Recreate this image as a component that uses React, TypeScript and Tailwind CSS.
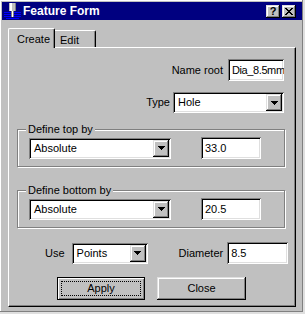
import React from "react";

const font = "font-['Liberation_Sans',Arial,sans-serif]";
const sunken =
  "shadow-[inset_1px_1px_#808080,inset_-1px_-1px_#ffffff,inset_2px_2px_#000000,inset_-2px_-2px_#dfdfdf]";
const raised =
  "shadow-[inset_-1px_-1px_#000000,inset_1px_1px_#dfdfdf,inset_-2px_-2px_#808080,inset_2px_2px_#ffffff]";

const Arrow = () => (
  <svg width="7" height="4" viewBox="0 0 7 4" shapeRendering="crispEdges">
    <path d="M0 0h7v1H0zM1 1h5v1H1zM2 2h3v1H2zM3 3h1v1H3z" fill="#000" />
  </svg>
);

const Combo = ({ value, className }: { value: string; className: string }) => (
  <div className={`flex h-[21px] bg-white p-[2px] ${sunken} ${className}`}>
    <span className="flex-1 pl-[3px] leading-[17px] text-[11px] text-black">{value}</span>
    <div className={`flex w-[16px] items-center justify-center bg-[#c0c0c0] ${raised}`}>
      <Arrow />
    </div>
  </div>
);

const Field = ({ value, className }: { value: string; className: string }) => (
  <div className={`flex h-[22px] items-center overflow-hidden whitespace-nowrap bg-white pl-[4px] text-[11px] text-black ${sunken} ${className}`}>
    {value}
  </div>
);

const Group = ({ title, mode, value, className }: { title: string; mode: string; value: string; className: string }) => (
  <div className={`relative ml-[8px] h-[38px] w-[268px] border border-[#808080] shadow-[1px_1px_0_#ffffff,inset_1px_1px_0_#ffffff] ${className}`}>
    <span className="absolute -top-[8px] left-[8px] bg-[#c0c0c0] px-[2px] text-[11px] leading-[14px] text-black">{title}</span>
    <div className="flex items-center pl-[11px] pt-[7px]">
      <Combo value={mode} className="w-[142px]" />
      <Field value={value} className="ml-[30px] w-[60px]" />
    </div>
  </div>
);

export default function App() {
  return (
    <div className={`h-[314px] w-[305px] bg-[#dfdfdf] ${font}`}>
      <div className="flex h-[312px] w-[303px] flex-col border-b border-r border-[#808080] bg-[#c0c0c0] pl-[2px] pt-[2px] shadow-[inset_1px_1px_#ffffff]">
        {/* title bar */}
        <div className="flex h-[18px] w-[300px] items-center bg-[#000080] pl-[2px]">
          <svg width="17" height="16" viewBox="0 0 17 16" shapeRendering="crispEdges">
            <rect x="0" y="9" width="17" height="1" fill="#0000ff" />
            <rect x="0" y="11" width="17" height="1" fill="#0000ff" />
            <rect x="0" y="13" width="17" height="1" fill="#0000ff" />
            <rect x="2" y="15" width="13" height="1" fill="#0000ff" />
            <rect x="5" y="0" width="7" height="8" fill="#c0c0c0" />
            <rect x="6" y="0" width="2" height="8" fill="#ffffff" />
            <rect x="11" y="0" width="1" height="8" fill="#808080" />
            <rect x="7" y="8" width="3" height="6" fill="#808080" />
            <rect x="8" y="8" width="1" height="6" fill="#ffffff" />
          </svg>
          <span className="ml-[2px] flex-1 text-[12px] font-bold text-white">Feature Form</span>
          <div className={`flex h-[13px] w-[14px] items-center justify-center bg-[#c0c0c0] pt-[1px] text-[11px] font-bold leading-none text-black ${raised}`}>
            ?
          </div>
          <div className={`ml-[2px] mr-[6px] flex h-[13px] w-[14px] items-center justify-center bg-[#c0c0c0] ${raised}`}>
            <svg width="8" height="7" viewBox="0 0 8 7" shapeRendering="crispEdges">
              <path
                d="M0 0h2v1H0zM6 0h2v1H6zM1 1h2v1H1zM5 1h2v1H5zM2 2h4v1H2zM3 3h2v1H3zM2 4h4v1H2zM1 5h2v1H1zM5 5h2v1H5zM0 6h2v1H0zM6 6h2v1H6z"
                fill="#000"
              />
            </svg>
          </div>
        </div>

        {/* tabs */}
        <div className="relative z-10 ml-[6px] mt-[8px] flex h-[19px] items-end">
          <div className="-mb-[1px] flex h-[20px] w-[47px] items-start rounded-t-[2px] border-l border-r border-t border-l-white border-r-black border-t-white bg-[#c0c0c0] pl-[8px] pt-[2px] text-[11px] text-black shadow-[inset_-1px_0_#808080]">
            Create
          </div>
          <div className="flex h-[17px] w-[41px] items-start rounded-tr-[2px] border-r border-t border-r-black border-t-white bg-[#c0c0c0] pl-[5px] pt-[1px] text-[11px] text-black shadow-[inset_-1px_0_#808080]">
            Edit
          </div>
        </div>

        {/* panel */}
        <div className="ml-[6px] flex h-[260px] w-[288px] flex-col border-b border-l border-r border-t border-b-black border-l-white border-r-black border-t-white text-[11px] text-black shadow-[inset_-1px_-1px_#808080]">
          <div className="mt-[11px] flex items-center justify-end gap-[5px] pr-[11px]">
            <span>Name root</span>
            <Field value="Dia_8.5mm" className="w-[56px] pl-[3px] tracking-[-0.4px]" />
          </div>
          <div className="mt-[11px] flex items-center justify-end gap-[3px] pr-[11px]">
            <span>Type</span>
            <Combo value="Hole" className="w-[111px]" />
          </div>
          <Group title="Define top by" mode="Absolute" value="33.0" className="mt-[16px]" />
          <Group title="Define bottom by" mode="Absolute" value="20.5" className="mt-[23px]" />
          <div className="mt-[14px] flex items-center">
            <span className="ml-[36px]">Use</span>
            <Combo value="Points" className="ml-[7px] w-[76px]" />
            <span className="ml-[31px]">Diameter</span>
            <Field value="8.5" className="ml-[4px] w-[61px]" />
          </div>
          <div className="mt-[13px] flex">
            <div className="ml-[48px] flex h-[23px] w-[88px] border border-black bg-[#c0c0c0] shadow-[inset_1px_1px_#ffffff,inset_-1px_-1px_#808080]">
              <span className="m-[3px] flex flex-1 items-center justify-center border border-dotted border-black">Apply</span>
            </div>
            <div className={`ml-[12px] flex h-[23px] w-[89px] items-center justify-center bg-[#c0c0c0] ${raised}`}>
              Close
            </div>
          </div>
        </div>
      </div>
    </div>
  );
}
